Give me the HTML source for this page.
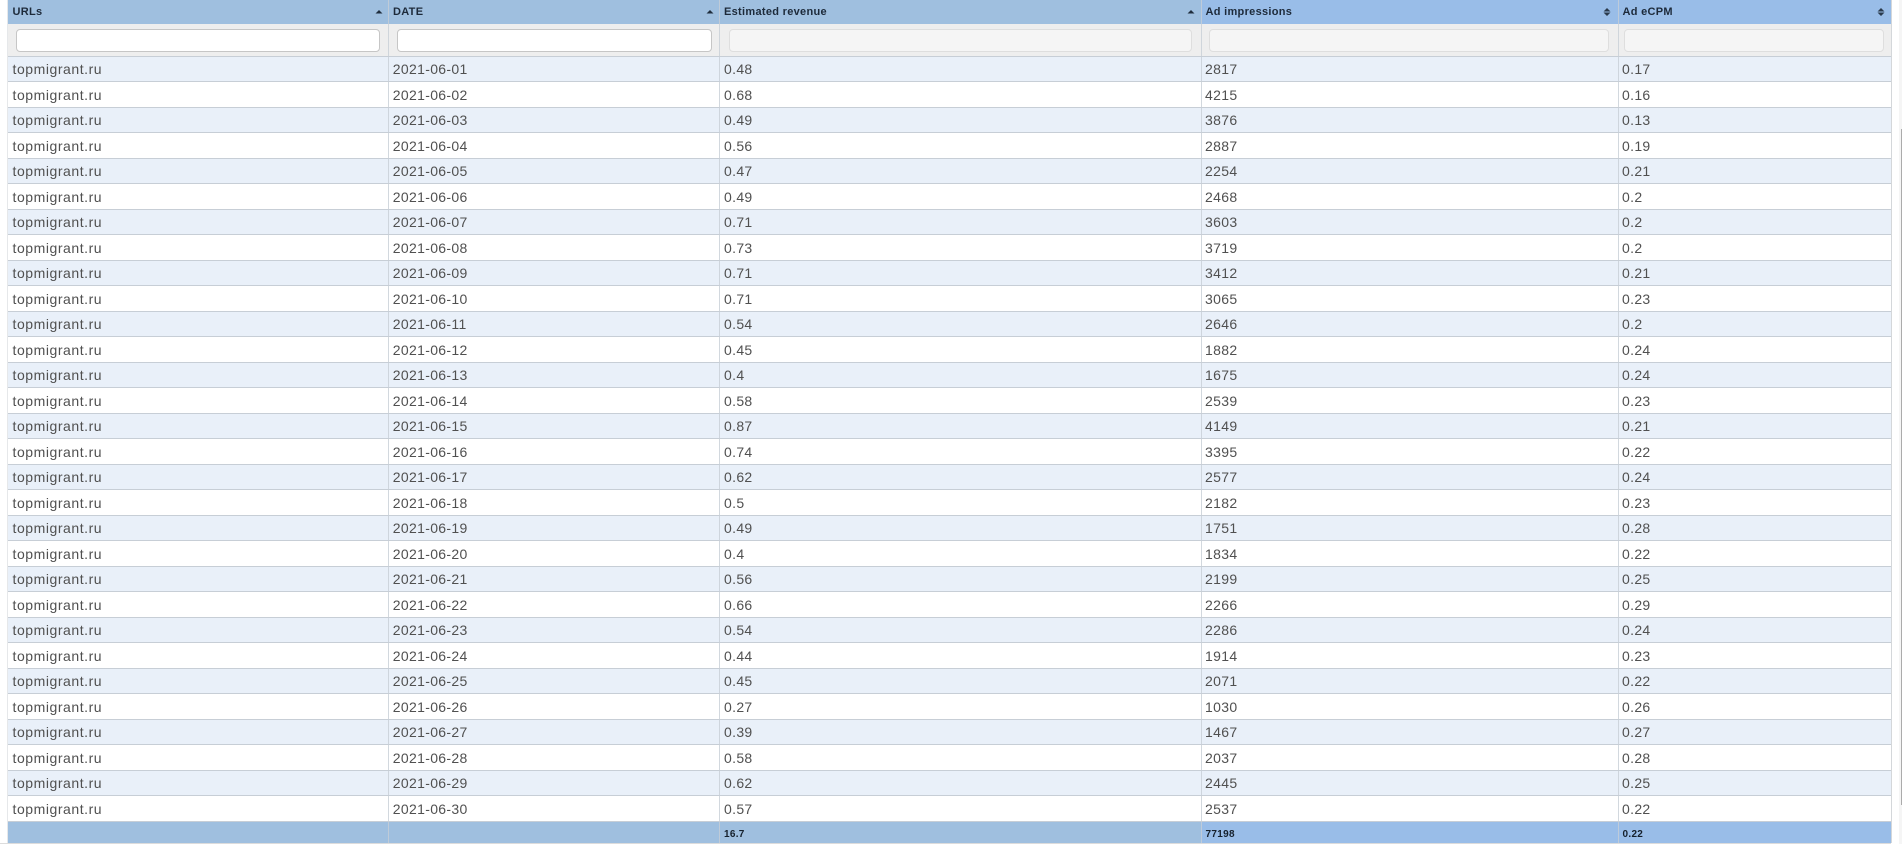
<!DOCTYPE html>
<html><head><meta charset="utf-8"><title>Report</title>
<style>
html,body{margin:0;padding:0;width:1902px;height:844px;overflow:hidden;background:#fff;font-family:"Liberation Sans",Arial,sans-serif}
#w{position:absolute;left:0;top:0;width:1902px;height:844px;overflow:hidden}
.a{position:absolute}
.h{position:absolute;top:0;height:24px;line-height:24px;font-size:11px;font-weight:bold;color:#1d2a3a;letter-spacing:.3px;box-sizing:border-box;padding-left:4.5px;white-space:nowrap}
.f{position:absolute;top:24px;height:32px;background:#eee}
.in{position:absolute;top:29px;height:23px;box-sizing:border-box;border-radius:4px}
.on{background:#fff;border:1px solid #c6c6c6}
.off{background:#f5f5f5;border:1px solid #dedede}
#rows{position:absolute;left:0;top:.5px;width:1902px;height:830px}
.r{position:absolute;left:8px;width:1883px;height:25.5px;box-sizing:border-box;border-bottom:1px solid #c7ced6;font-size:14px;line-height:25px;color:#505050;letter-spacing:.32px}
.r.o{background:#e9f0f9}
.r span{position:absolute;top:.5px;white-space:nowrap}
.r span:nth-child(1){left:4.5px;letter-spacing:.55px}
.r span:nth-child(2){left:384.8px}
.r span:nth-child(3){left:716px}
.r span:nth-child(4){left:1197px}
.r span:nth-child(5){left:1614px}
.v{position:absolute;top:0;width:1px;height:843px;background:#c7ced6;opacity:.8}
.t{position:absolute;top:822px;height:21px;box-sizing:border-box;padding-left:4.5px;font-size:10px;font-weight:bold;line-height:25px;color:#15202c;letter-spacing:.3px}
svg{position:absolute;left:0;top:0}
</style></head><body><div id="w">
<div class="a" style="left:7px;top:0;width:1px;height:843px;background:#e6e8ea"></div>
<div class="a" style="left:1891px;top:0;width:1px;height:843px;background:#d4d7da"></div>
<div class="a" style="left:1899px;top:0;width:3px;height:844px;background:#f5f5f5"></div>
<div class="a" style="left:1901px;top:129px;width:1px;height:676px;background:#ababab"></div>
<div class="a" style="left:0;top:843px;width:1891px;height:1px;background:#dcdcdc"></div>

<div class="h" style="left:8px;width:380.5px;background:#9fbfdf">URLs</div>
<div class="h" style="left:388.5px;width:331px;background:#9fbfdf">DATE</div>
<div class="h" style="left:719.5px;width:481.5px;background:#9fbfdf">Estimated revenue</div>
<div class="h" style="left:1201px;width:417px;background:#99bde8">Ad impressions</div>
<div class="h" style="left:1618px;width:273px;background:#99bde8">Ad eCPM</div>

<div class="f" style="left:8px;width:1883px"></div>
<div class="in on" style="left:16px;width:364px"></div>
<div class="in on" style="left:396.5px;width:315px"></div>
<div class="in off" style="left:729px;width:463px"></div>
<div class="in off" style="left:1209px;width:400px"></div>
<div class="in off" style="left:1624px;width:260px"></div>

<div id="rows">
<div class="r o" style="top:56px"><span>topmigrant.ru</span><span>2021-06-01</span><span>0.48</span><span>2817</span><span>0.17</span></div>
<div class="r" style="top:81.5px"><span>topmigrant.ru</span><span>2021-06-02</span><span>0.68</span><span>4215</span><span>0.16</span></div>
<div class="r o" style="top:107px"><span>topmigrant.ru</span><span>2021-06-03</span><span>0.49</span><span>3876</span><span>0.13</span></div>
<div class="r" style="top:132.5px"><span>topmigrant.ru</span><span>2021-06-04</span><span>0.56</span><span>2887</span><span>0.19</span></div>
<div class="r o" style="top:158px"><span>topmigrant.ru</span><span>2021-06-05</span><span>0.47</span><span>2254</span><span>0.21</span></div>
<div class="r" style="top:183.5px"><span>topmigrant.ru</span><span>2021-06-06</span><span>0.49</span><span>2468</span><span>0.2</span></div>
<div class="r o" style="top:209px"><span>topmigrant.ru</span><span>2021-06-07</span><span>0.71</span><span>3603</span><span>0.2</span></div>
<div class="r" style="top:234.5px"><span>topmigrant.ru</span><span>2021-06-08</span><span>0.73</span><span>3719</span><span>0.2</span></div>
<div class="r o" style="top:260px"><span>topmigrant.ru</span><span>2021-06-09</span><span>0.71</span><span>3412</span><span>0.21</span></div>
<div class="r" style="top:285.5px"><span>topmigrant.ru</span><span>2021-06-10</span><span>0.71</span><span>3065</span><span>0.23</span></div>
<div class="r o" style="top:311px"><span>topmigrant.ru</span><span>2021-06-11</span><span>0.54</span><span>2646</span><span>0.2</span></div>
<div class="r" style="top:336.5px"><span>topmigrant.ru</span><span>2021-06-12</span><span>0.45</span><span>1882</span><span>0.24</span></div>
<div class="r o" style="top:362px"><span>topmigrant.ru</span><span>2021-06-13</span><span>0.4</span><span>1675</span><span>0.24</span></div>
<div class="r" style="top:387.5px"><span>topmigrant.ru</span><span>2021-06-14</span><span>0.58</span><span>2539</span><span>0.23</span></div>
<div class="r o" style="top:413px"><span>topmigrant.ru</span><span>2021-06-15</span><span>0.87</span><span>4149</span><span>0.21</span></div>
<div class="r" style="top:438.5px"><span>topmigrant.ru</span><span>2021-06-16</span><span>0.74</span><span>3395</span><span>0.22</span></div>
<div class="r o" style="top:464px"><span>topmigrant.ru</span><span>2021-06-17</span><span>0.62</span><span>2577</span><span>0.24</span></div>
<div class="r" style="top:489.5px"><span>topmigrant.ru</span><span>2021-06-18</span><span>0.5</span><span>2182</span><span>0.23</span></div>
<div class="r o" style="top:515px"><span>topmigrant.ru</span><span>2021-06-19</span><span>0.49</span><span>1751</span><span>0.28</span></div>
<div class="r" style="top:540.5px"><span>topmigrant.ru</span><span>2021-06-20</span><span>0.4</span><span>1834</span><span>0.22</span></div>
<div class="r o" style="top:566px"><span>topmigrant.ru</span><span>2021-06-21</span><span>0.56</span><span>2199</span><span>0.25</span></div>
<div class="r" style="top:591.5px"><span>topmigrant.ru</span><span>2021-06-22</span><span>0.66</span><span>2266</span><span>0.29</span></div>
<div class="r o" style="top:617px"><span>topmigrant.ru</span><span>2021-06-23</span><span>0.54</span><span>2286</span><span>0.24</span></div>
<div class="r" style="top:642.5px"><span>topmigrant.ru</span><span>2021-06-24</span><span>0.44</span><span>1914</span><span>0.23</span></div>
<div class="r o" style="top:668px"><span>topmigrant.ru</span><span>2021-06-25</span><span>0.45</span><span>2071</span><span>0.22</span></div>
<div class="r" style="top:693.5px"><span>topmigrant.ru</span><span>2021-06-26</span><span>0.27</span><span>1030</span><span>0.26</span></div>
<div class="r o" style="top:719px"><span>topmigrant.ru</span><span>2021-06-27</span><span>0.39</span><span>1467</span><span>0.27</span></div>
<div class="r" style="top:744.5px"><span>topmigrant.ru</span><span>2021-06-28</span><span>0.58</span><span>2037</span><span>0.28</span></div>
<div class="r o" style="top:770px"><span>topmigrant.ru</span><span>2021-06-29</span><span>0.62</span><span>2445</span><span>0.25</span></div>
<div class="r" style="top:795.5px"><span>topmigrant.ru</span><span>2021-06-30</span><span>0.57</span><span>2537</span><span>0.22</span></div>
</div>

<div class="t" style="left:8px;width:711.5px;background:#9fbfdf"></div>
<div class="t" style="left:719.5px;width:481.5px;background:#9fbfdf">16.7</div>
<div class="t" style="left:1201px;width:417px;background:#99bde8">77198</div>
<div class="t" style="left:1618px;width:273px;background:#99bde8">0.22</div>

<div class="a" style="left:8px;top:56px;width:1883px;height:1px;background:#c7ced6"></div>
<div class="v" style="left:388px"></div>
<div class="v" style="left:719px"></div>
<div class="v" style="left:1200.5px"></div>
<div class="v" style="left:1617.5px"></div>

<svg width="1902" height="24" viewBox="0 0 1902 24">
<path d="M375.500 13.500 L379 10 L382.500 13.500Z M706.500 13.500 L710 10 L713.500 13.500Z M1187.500 13.500 L1191 10 L1194.500 13.500Z" fill="#1f2d3d"/>
<path d="M1603.500 11.500 L1607 8 L1610.500 11.500Z M1603.500 12.500 L1607 16 L1610.500 12.500Z M1877.500 11.500 L1881 8 L1884.500 11.500Z M1877.500 12.500 L1881 16 L1884.500 12.500Z" fill="#2a3a4c"/>
</svg>
</div></body></html>
